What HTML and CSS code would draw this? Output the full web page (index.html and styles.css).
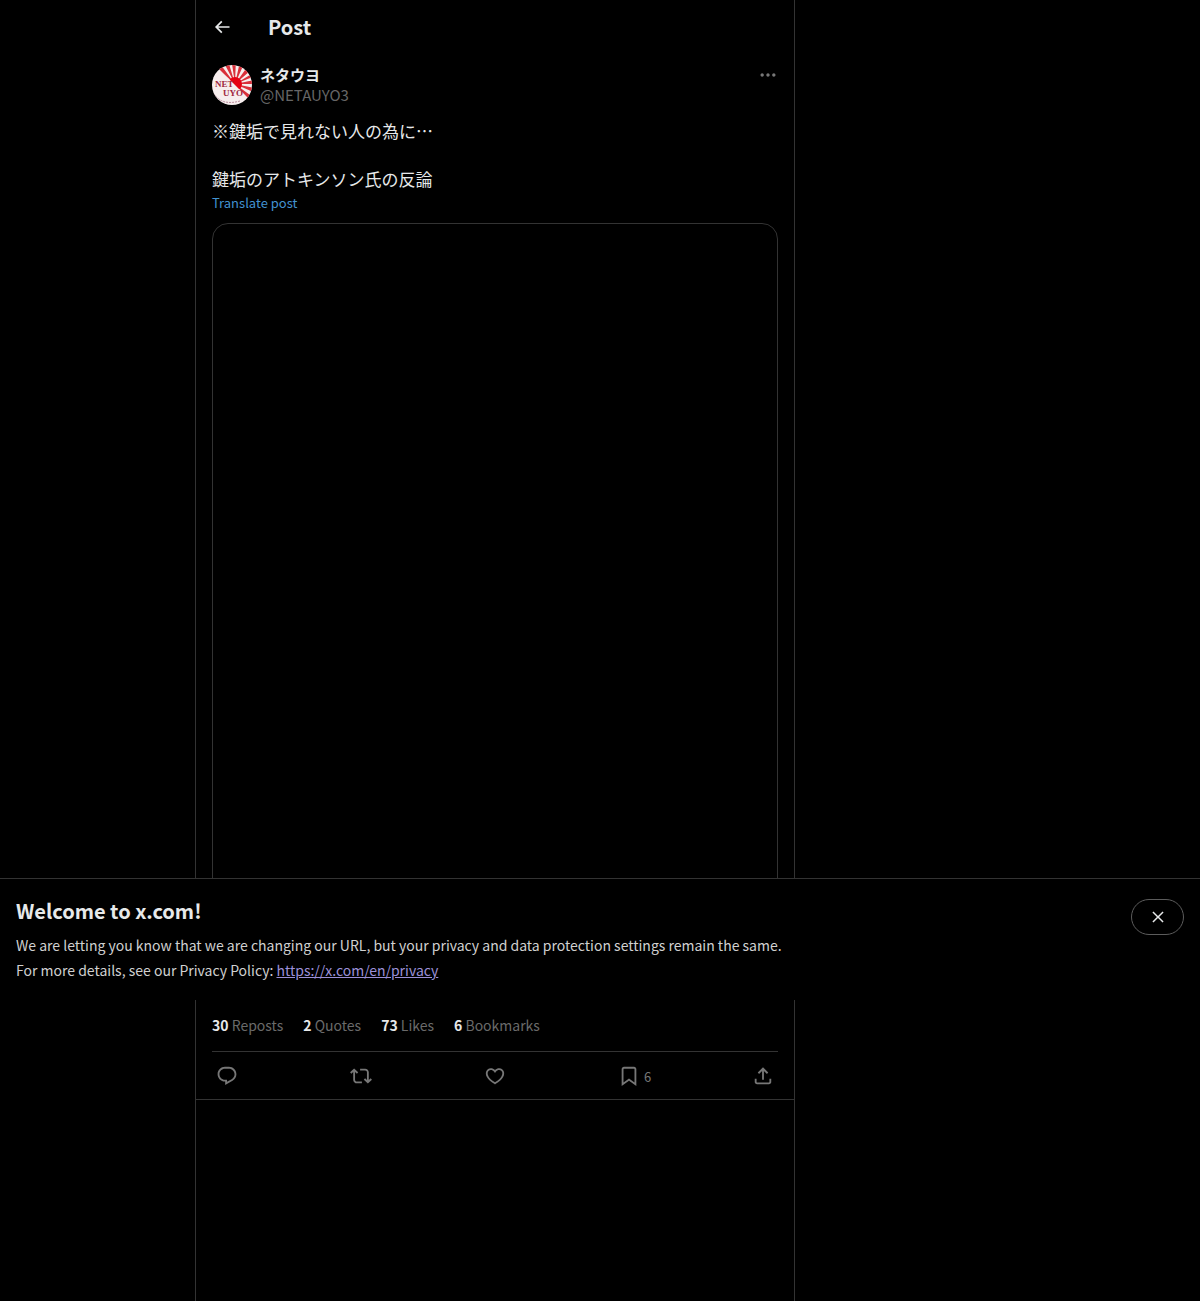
FILE: index.html
```
<!DOCTYPE html>
<html lang="ja">
<head>
    <meta charset="UTF-8">
    <meta name="viewport" content="width=device-width, initial-scale=1.0">
    <title>Post</title>
    <link rel="stylesheet" href="styles.css">
</head>
<body>

<div class="layout">
    <main class="column">
        <header class="topbar">
            <button class="icon-button" type="button" aria-label="Back">
                <svg class="icon-back" viewBox="0 0 24 24"><path d="M7.414 13l5.043 5.04-1.414 1.42L3.586 12l7.457-7.46 1.414 1.42L7.414 11H21v2H7.414z"/></svg>
            </button>
            <h1>Post</h1>
        </header>

        <article class="post">
            <div class="author">
                <svg class="avatar" viewBox="0 0 40 40" role="img" aria-label="ネタウヨ">
                    <defs>
                        <clipPath id="round"><circle cx="20" cy="20" r="20"/></clipPath>
                        <clipPath id="half"><path d="M4 1L40 37V-2H4z"/></clipPath>
                    </defs>
                    <g clip-path="url(#round)">
                        <rect width="40" height="40" fill="#f7eeee"/>
                        <g clip-path="url(#half)">
                            <path fill="#d9303a" d="M23 19L1 0 6-4zM23 19L10-6 15-8zM23 19L19-8 24-8zM23 19L29-8 35-8zM23 19L41-6 46-1zM23 19L48 4 48 9zM23 19L48 14 48 19zM23 19L48 24 48 30zM23 19L46 36 42 41z"/>
                            <circle cx="23" cy="19" r="7" fill="#e60012"/>
                        </g>
                        <text class="avatar-text" x="3" y="22">NET</text>
                        <text class="avatar-text" x="11" y="31">UYO</text>
                        <path d="M2 29Q10 41 28 36" fill="none" stroke="#b98a9c" stroke-width="1" stroke-dasharray="2 1"/>
                    </g>
                </svg>
                <div class="names">
                    <a class="name" href="#">ネタウヨ</a>
                    <a class="handle" href="#">@NETAUYO3</a>
                </div>
                <button class="icon-button more" type="button" aria-label="More">
                    <svg class="icon" viewBox="0 0 24 24"><path d="M3 12c0-1.100.9-2 2-2s2 .9 2 2-.9 2-2 2-2-.9-2-2zm9 2c1.100 0 2-.9 2-2s-.9-2-2-2-2 .9-2 2 .9 2 2 2zm7 0c1.100 0 2-.9 2-2s-.9-2-2-2-2 .9-2 2 .9 2 2 2z"/></svg>
                </button>
            </div>

            <div class="post-text">
                <p>※鍵垢で見れない人の為に…</p>
                <p>鍵垢のアトキンソン氏の反論</p>
            </div>
            <button class="translate" type="button">Translate post</button>

            <div class="media"></div>

            <div class="stats">
                <a href="#"><strong>30</strong> Reposts</a>
                <a href="#"><strong>2</strong> Quotes</a>
                <a href="#"><strong>73</strong> Likes</a>
                <a href="#"><strong>6</strong> Bookmarks</a>
            </div>

            <div class="actions">
                <button class="action" type="button" aria-label="Reply">
                    <svg class="icon" viewBox="0 0 24 24"><path d="M1.751 10c0-4.420 3.584-8 8.005-8h4.366c4.490 0 8.129 3.640 8.129 8.130 0 2.960-1.607 5.680-4.196 7.110l-8.054 4.460v-3.690h-.067c-4.490.1-8.183-3.510-8.183-8.010zm8.005-6c-3.317 0-6.005 2.690-6.005 6 0 3.370 2.770 6.080 6.138 6.010l.351-.010h1.761v2.300l5.087-2.810c1.951-1.080 3.163-3.130 3.163-5.360 0-3.390-2.744-6.130-6.129-6.130H9.756z"/></svg>
                </button>
                <button class="action" type="button" aria-label="Repost">
                    <svg class="icon" viewBox="0 0 24 24"><path d="M4.500 3.880l4.432 4.140-1.364 1.460L5.500 7.550V16c0 1.100.896 2 2 2H13v2H7.500c-2.209 0-4-1.790-4-4V7.550L1.432 9.480.068 8.020 4.500 3.880zM16.500 6H11V4h5.500c2.209 0 4 1.790 4 4v8.450l2.068-1.930 1.364 1.460-4.432 4.140-4.432-4.140 1.364-1.460 2.068 1.930V8c0-1.100-.896-2-2-2z"/></svg>
                </button>
                <button class="action" type="button" aria-label="Like">
                    <svg class="icon" viewBox="0 0 24 24"><path d="M16.697 5.500c-1.222-.060-2.679.510-3.890 2.160l-.805 1.090-.806-1.090C9.984 6.010 8.526 5.440 7.304 5.500c-1.243.070-2.349.780-2.910 1.910-.552 1.120-.633 2.780.479 4.820 1.074 1.970 3.257 4.270 7.129 6.610 3.870-2.340 6.052-4.640 7.126-6.610 1.111-2.040 1.030-3.700.477-4.820-.561-1.130-1.666-1.840-2.908-1.910zm4.187 7.690c-1.351 2.480-4.001 5.120-8.379 7.670l-.503.300-.504-.300c-4.379-2.550-7.029-5.190-8.382-7.670-1.360-2.500-1.410-4.860-.514-6.670.887-1.790 2.647-2.910 4.601-3.010 1.651-.090 3.368.560 4.798 2.010 1.429-1.450 3.146-2.100 4.796-2.010 1.954.1 3.714 1.220 4.601 3.010.896 1.810.846 4.170-.514 6.670z"/></svg>
                </button>
                <button class="action" type="button" aria-label="Bookmark">
                    <svg class="icon" viewBox="0 0 24 24"><path d="M4 4.500C4 3.120 5.119 2 6.500 2h11C18.881 2 20 3.120 20 4.500v18.440l-8-5.710-8 5.710V4.500zM6.500 4c-.276 0-.5.220-.5.500v14.560l6-4.290 6 4.290V4.500c0-.280-.224-.500-.5-.500h-11z"/></svg>
                    <span>6</span>
                </button>
                <button class="action" type="button" aria-label="Share">
                    <svg class="icon" viewBox="0 0 24 24"><path d="M12 2.590l5.700 5.700-1.410 1.420L13 6.410V16h-2V6.410l-3.300 3.300-1.410-1.420L12 2.590zM21 15l-.020 3.510c0 1.380-1.120 2.490-2.500 2.490H5.500C4.110 21 3 19.880 3 18.500V15h2v3.500c0 .280.220.500.500.500h12.980c.280 0 .500-.220.500-.500L19 15h2z"/></svg>
                </button>
            </div>
        </article>
    </main>
</div>

<section class="banner">
    <div class="banner-body">
        <h2>Welcome to x.com!</h2>
        <p>We are letting you know that we are changing our URL, but your privacy and data protection settings remain the same.</p>
        <p>For more details, see our Privacy Policy: <a href="#">https://x.com/en/privacy</a></p>
    </div>
    <button class="close" type="button" aria-label="Close">
        <svg class="icon" viewBox="0 0 24 24"><path d="M10.590 12L4.540 5.960l1.420-1.420L12 10.590l6.040-6.050 1.420 1.420L13.410 12l6.050 6.040-1.420 1.420L12 13.410l-6.040 6.050-1.420-1.420L10.590 12z"/></svg>
    </button>
</section>

</body>
</html>
```
FILE: styles.css
```
* {
    box-sizing: border-box;
}
body {
    margin: 0;
    background: #000;
    color: #e7e9ea;
    font-family: "Noto Sans CJK JP", sans-serif;
    font-size: 14px;
    line-height: 20px;
}
h1, h2, p {
    margin: 0;
}
a {
    color: inherit;
    text-decoration: none;
}
button {
    padding: 0;
    border: none;
    background: none;
    color: inherit;
    font: inherit;
    cursor: pointer;
}
svg {
    display: block;
    fill: currentColor;
}
.layout {
    max-width: 810px;
    margin: 0 auto;
}
.column {
    max-width: 600px;
    min-height: 100vh;
    border: 1px solid #333;
    border-width: 0 1px;
}
.topbar {
    display: flex;
    align-items: center;
    height: 53px;
    padding: 0 16px;
}
.topbar .icon-button {
    width: 56px;
}
.topbar h1 {
    font-size: 20px;
    line-height: 24px;
}
.icon-back {
    width: 20px;
    height: 20px;
}
.icon {
    width: 22px;
    height: 22px;
    flex-shrink: 0;
}
.post {
    padding: 12px 16px 0;
    border-bottom: 1px solid #333;
}
.author {
    display: flex;
    align-items: flex-start;
    gap: 8px;
    margin-bottom: 14px;
}
.avatar {
    width: 40px;
    height: 40px;
}
.avatar-text {
    font-family: "Liberation Serif", serif;
    font-size: 9px;
    font-weight: bold;
    fill: #a02840;
}
.names {
    display: flex;
    flex: 1;
    flex-direction: column;
    font-size: 15px;
}
.name {
    font-weight: bold;
}
.handle {
    color: #666;
}
.more {
    color: #777;
}
.more .icon {
    width: 20px;
    height: 20px;
}
.post-text {
    display: grid;
    gap: 24px;
    font-size: 17px;
    line-height: 24px;
}
.translate {
    display: block;
    margin-bottom: 8px;
    color: #4292d0;
    font-size: 13px;
    line-height: 24px;
}
.media {
    height: 740px;
    margin-bottom: 36px;
    border: 1px solid #333;
    border-radius: 16px;
}
.stats {
    display: flex;
    gap: 20px;
    padding: 16px 0;
    border-bottom: 1px solid #333;
    color: #6a6a6a;
}
.stats strong {
    color: #e7e9ea;
}
.actions {
    display: flex;
    align-items: center;
    justify-content: space-between;
    height: 47px;
    padding: 0 4px;
    color: #777;
}
.action {
    display: flex;
    align-items: flex-end;
    width: 22px;
    gap: 4px;
    font-size: 13px;
}
.banner {
    position: absolute;
    top: 878px;
    left: 0;
    right: 0;
    display: flex;
    align-items: flex-start;
    justify-content: space-between;
    padding: 20px 16px 17px;
    border-top: 1px solid #333;
    background: #000;
}
.banner h2 {
    margin-bottom: 10px;
    font-size: 20px;
    line-height: 24px;
}
.banner p {
    color: #d0d0d0;
    line-height: 25px;
}
.banner p a {
    color: #9c90d8;
    text-decoration: underline;
}
.close {
    display: flex;
    align-items: center;
    justify-content: center;
    width: 53px;
    height: 36px;
    border: 1px solid #5c5c5c;
    border-radius: 18px;
    flex-shrink: 0;
}
.close .icon {
    width: 18px;
    height: 18px;
}
```
